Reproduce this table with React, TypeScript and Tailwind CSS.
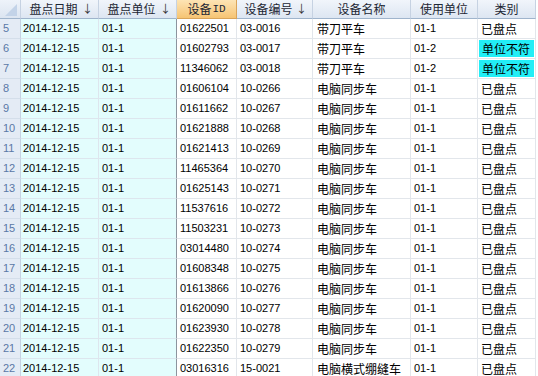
import React from 'react'

type Row = { n: number; id: string; code: string; name: string; unit: string; kind: string }

const rows: Row[] = [
  { n: 5, id: '01622501', code: '03-0016', name: '带刀平车', unit: '01-1', kind: '已盘点' },
  { n: 6, id: '01602793', code: '03-0017', name: '带刀平车', unit: '01-2', kind: '单位不符' },
  { n: 7, id: '11346062', code: '03-0018', name: '带刀平车', unit: '01-2', kind: '单位不符' },
  { n: 8, id: '01606104', code: '10-0266', name: '电脑同步车', unit: '01-1', kind: '已盘点' },
  { n: 9, id: '01611662', code: '10-0267', name: '电脑同步车', unit: '01-1', kind: '已盘点' },
  { n: 10, id: '01621888', code: '10-0268', name: '电脑同步车', unit: '01-1', kind: '已盘点' },
  { n: 11, id: '01621413', code: '10-0269', name: '电脑同步车', unit: '01-1', kind: '已盘点' },
  { n: 12, id: '11465364', code: '10-0270', name: '电脑同步车', unit: '01-1', kind: '已盘点' },
  { n: 13, id: '01625143', code: '10-0271', name: '电脑同步车', unit: '01-1', kind: '已盘点' },
  { n: 14, id: '11537616', code: '10-0272', name: '电脑同步车', unit: '01-1', kind: '已盘点' },
  { n: 15, id: '11503231', code: '10-0273', name: '电脑同步车', unit: '01-1', kind: '已盘点' },
  { n: 16, id: '03014480', code: '10-0274', name: '电脑同步车', unit: '01-1', kind: '已盘点' },
  { n: 17, id: '01608348', code: '10-0275', name: '电脑同步车', unit: '01-1', kind: '已盘点' },
  { n: 18, id: '01613866', code: '10-0276', name: '电脑同步车', unit: '01-1', kind: '已盘点' },
  { n: 19, id: '01620090', code: '10-0277', name: '电脑同步车', unit: '01-1', kind: '已盘点' },
  { n: 20, id: '01623930', code: '10-0278', name: '电脑同步车', unit: '01-1', kind: '已盘点' },
  { n: 21, id: '01622350', code: '10-0279', name: '电脑同步车', unit: '01-1', kind: '已盘点' },
  { n: 22, id: '03016316', code: '15-0021', name: '电脑横式绷缝车', unit: '01-1', kind: '已盘点' },
]

const cols = 'grid grid-cols-[21px_78px_78px_60px_76px_98px_67px_58px]'
const num = "font-['Liberation_Sans',sans-serif] text-[11px]"
const cjk = "font-['Noto_Sans_CJK_SC',sans-serif] text-[12px]"

function Head({ label, sort }: { label: string; sort?: boolean }) {
  return (
    <div
      className={`relative flex h-[19px] items-center justify-center border-r border-b border-r-[#c6d2e2] border-b-[#9fb4cc] bg-gradient-to-b from-[#f1f5fb] to-[#dde6f2] ${cjk} leading-none text-[#1c2633]`}
    >
      <span className={sort ? '-ml-3' : ''}>{label}</span>
      {sort && <span className="absolute right-[5px] top-[3px] text-[11px] text-[#333]">↓</span>}
    </div>
  )
}

export default function App() {
  return (
    <div className="h-[376px] w-[538px] overflow-hidden bg-white">
      {/* header */}
      <div className={cols}>
        <div className="relative h-[19px] border-r border-b border-r-[#c6d2e2] border-b-[#9fb4cc] bg-gradient-to-b from-[#eef3fa] to-[#dce5f1]">
          <svg width="20" height="18" className="absolute left-0 top-0">
            <polygon points="17,4 17,16 5,16" fill="#c3d3e8" />
          </svg>
        </div>
        <Head label="盘点日期" sort />
        <Head label="盘点单位" sort />
        <div className={`flex h-[19px] items-center justify-center border-r border-b border-r-[#d9a45a] border-b-[#d9a45a] ${cjk} bg-gradient-to-b from-[#fde4b4] to-[#f6c473] leading-none text-[#1c2633]`}>
          设备<span className="ml-[1px] font-['Liberation_Mono',monospace] text-[11px]">ID</span>
        </div>
        <Head label="设备编号" sort />
        <Head label="设备名称" />
        <Head label="使用单位" />
        <Head label="类别" />
      </div>

      {/* rows */}
      {rows.map((r) => (
        <div key={r.n} className={cols}>
          <div className={`flex h-[20px] items-center border-r border-b border-r-[#c6d2e2] border-b-[#d4deea] bg-[#e4ebf5] pl-[3px] ${num} text-[#5a78a6]`}>
            {r.n}
          </div>
          <div className={`flex h-[20px] items-center border-r border-b border-[#dde6ee] bg-[#e3fdfd] pl-[2px] ${num} text-black`}>
            2014-12-15
          </div>
          <div className={`flex h-[20px] items-center border-r border-b border-b-[#dde6ee] border-r-[#8c949e] bg-[#e3fdfd] pl-[3px] ${num} text-black`}>
            01-1
          </div>
          <div className={`flex h-[20px] items-center border-r border-b border-[#e2e6eb] pl-[3px] ${num} text-black`}>{r.id}</div>
          <div className={`flex h-[20px] items-center border-r border-b border-[#e2e6eb] pl-[3px] ${num} text-black`}>{r.code}</div>
          <div className={`flex h-[20px] items-center border-r border-b border-[#e2e6eb] pl-[4px] ${cjk} text-black`}>{r.name}</div>
          <div className={`flex h-[20px] items-center border-r border-b border-[#e2e6eb] pl-[3px] ${num} text-black`}>{r.unit}</div>
          <div className="flex h-[20px] border-r border-b border-[#e2e6eb]">
            <div
              className={`flex flex-1 items-center pl-[3px] ${cjk} text-black ${
                r.kind === '单位不符' ? 'm-[1px] bg-[#22eef6]' : ''
              }`}
            >
              {r.kind}
            </div>
          </div>
        </div>
      ))}
    </div>
  )
}
